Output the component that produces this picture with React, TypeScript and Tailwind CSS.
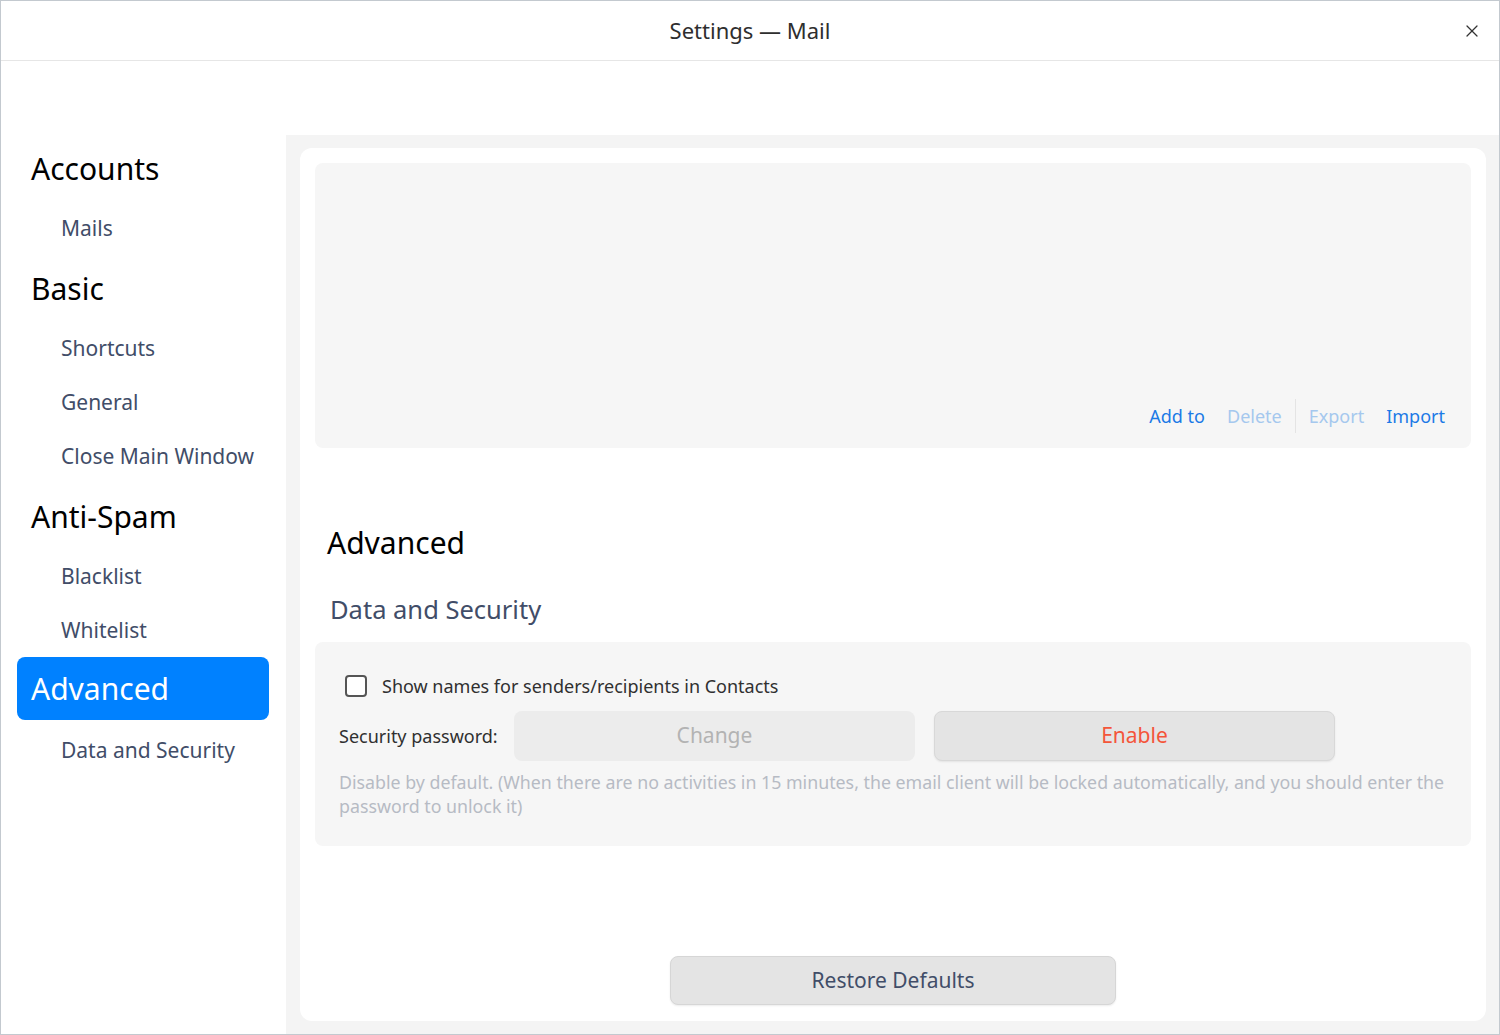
import { X } from 'lucide-react';

const font = { fontFamily: '"Noto Sans", "Open Sans", sans-serif' };

function Heading({ label, selected }: { label: string; selected?: boolean }) {
    if (selected) {
        return (
            <div className="h-[66px] pb-[3px]">
                <div className="h-[63px] rounded-lg bg-[#0081ff] pl-[14px] flex items-center text-[30px] text-white">
                    {label}
                </div>
            </div>
        );
    }
    return (
        <div className="h-[66px] pl-[14px] flex items-center text-[30px] text-black">
            {label}
        </div>
    );
}

function SubItem({ label }: { label: string }) {
    return (
        <div className="h-[54px] pl-[44px] pt-px flex items-center text-[21px] text-[#414d68]">
            {label}
        </div>
    );
}

export default function App() {
    return (
        <div style={font} className="w-[1500px] h-[1035px] border border-[#c3c9cf] bg-white flex flex-col overflow-hidden">
            <div className="relative h-[60px] shrink-0 border-b border-[#e6e6e6] flex items-center justify-center">
                <span className="text-[22px] text-[#2e2e2e]">Settings — Mail</span>
                <button className="absolute right-[17px] top-[20px] text-[#333]">
                    <X size={20} strokeWidth={1.5} />
                </button>
            </div>

            <div className="flex-1 flex pt-[74px] min-h-0">
                <div className="w-[285px] shrink-0 pl-4 pr-[17px]">
                    <Heading label="Accounts" />
                    <SubItem label="Mails" />
                    <Heading label="Basic" />
                    <SubItem label="Shortcuts" />
                    <SubItem label="General" />
                    <SubItem label="Close Main Window" />
                    <Heading label="Anti-Spam" />
                    <SubItem label="Blacklist" />
                    <SubItem label="Whitelist" />
                    <Heading label="Advanced" selected />
                    <SubItem label="Data and Security" />
                </div>

                <div className="flex-1 bg-[#f4f4f4] pl-[14px] pr-[13px] pt-[13px] pb-[13px] flex">
                    <div className="flex-1 bg-white rounded-xl p-[15px] flex flex-col">
                        <div className="h-[285px] shrink-0 rounded-lg bg-[#f6f6f6] flex items-end justify-end pr-[26px] pb-[17px]">
                            <div className="flex items-center text-[18px] h-[30px]">
                                <span className="text-[#1c7ae6]">Add to</span>
                                <span className="ml-[22px] text-[#a5c8ee]">Delete</span>
                                <span className="ml-[13px] w-px h-[34px] bg-[#e4e4e4]" />
                                <span className="ml-[13px] text-[#a5c8ee]">Export</span>
                                <span className="ml-[22px] text-[#1c7ae6]">Import</span>
                            </div>
                        </div>

                        <div className="mt-[75px] pl-[12px] text-[30px] leading-[40px] text-black">Advanced</div>
                        <div className="mt-[30px] pl-[15px] text-[25.5px] leading-[32px] text-[#414d68]">Data and Security</div>

                        <div className="mt-[17px] rounded-lg bg-[#f6f6f6] pl-[24px] pr-[4px] pt-[31px] pb-[28px]">
                            <div className="flex items-center h-[26px]">
                                <span className="ml-[6px] w-[22px] h-[22px] rounded-[4px] border-2 border-[#555] bg-white" />
                                <span className="ml-[15px] text-[18px] text-[#303030]">Show names for senders/recipients in Contacts</span>
                            </div>
                            <div className="mt-[12px] flex items-center">
                                <span className="text-[18px] text-[#303030] w-[175px]">Security password:</span>
                                <div className="w-[401px] h-[50px] rounded-lg bg-[#ececec] flex items-center justify-center text-[21px] text-[#b3b3b3]">
                                    Change
                                </div>
                                <div className="ml-[19px] w-[401px] h-[50px] rounded-lg bg-[#e4e4e4] border border-[#d8d8d8] shadow-[0_1px_2px_rgba(0,0,0,0.08)] flex items-center justify-center text-[21px] text-[#f4553a]">
                                    Enable
                                </div>
                            </div>
                            <p className="mt-[9px] text-[17.8px] leading-[24px] text-[#b6bbc4]">
                                Disable by default. (When there are no activities in 15 minutes, the email client will be locked automatically, and you should enter the password to unlock it)
                            </p>
                        </div>

                        <div className="mt-auto mb-px flex justify-center">
                            <button className="w-[446px] h-[49px] rounded-lg bg-[#e4e4e4] border border-[#d6d6d6] shadow-[0_1px_2px_rgba(0,0,0,0.08)] text-[21px] text-[#414d68]">
                                Restore Defaults
                            </button>
                        </div>
                    </div>
                </div>
            </div>
        </div>
    );
}
